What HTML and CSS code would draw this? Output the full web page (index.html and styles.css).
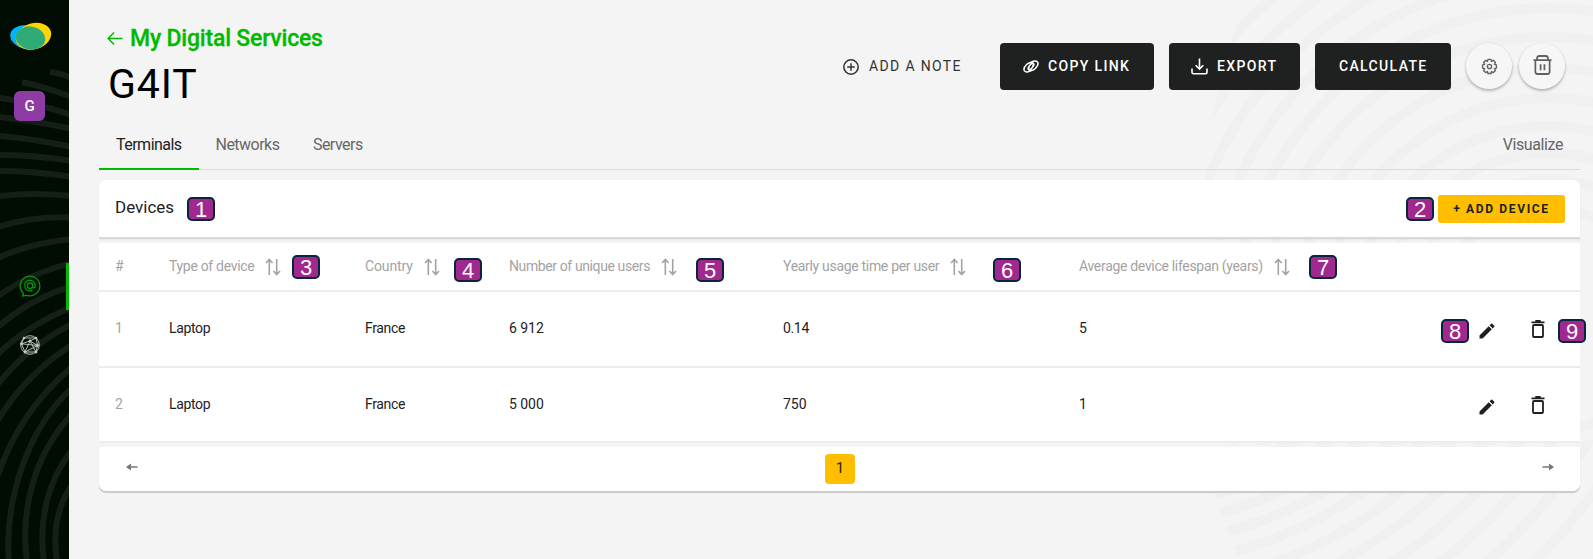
FILE: index.html
```html
<!DOCTYPE html>
<html lang="en">
<head>
<meta charset="utf-8">
<title>G4IT - My Digital Services</title>
<link rel="stylesheet" href="styles.css">
</head>
<body>
<svg class="defs" width="0" height="0" aria-hidden="true">
  <symbol id="sort" viewBox="0 0 16 18"><path d="M4.300 17V1.500M1 5l3.300-3.500L7.600 5M11.700 1v15.500M8.400 13l3.300 3.500L15 13" fill="none" stroke="currentColor" stroke-width="1.600"/></symbol>
  <symbol id="edit" viewBox="0 0 24 24"><path d="M3 17.250V21h3.750L17.810 9.940l-3.750-3.750L3 17.250zM20.710 7.040a1 1 0 0 0 0-1.410l-2.340-2.340a1 1 0 0 0-1.410 0l-1.830 1.830 3.750 3.750 1.830-1.830z"/></symbol>
  <symbol id="bin" viewBox="0 0 14 18"><path d="M.5 2.300h13M4.300.9h5.400" fill="none" stroke="currentColor" stroke-width="1.800"/><rect x="2" y="5" width="10" height="12" rx="1" fill="none" stroke="currentColor" stroke-width="1.800"/></symbol>
</svg>
<div class="app">
  <aside class="sidebar">
    <svg class="sidebar-rings" width="69" height="559" viewBox="0 0 69 559">
      <g fill="none" stroke="#142017" stroke-width="6">
        <path d="M50 72Q60 73 72 78M22 82Q45 87 72 97M0 98Q35 103 72 115M0 117Q35 121 72 129M0 136Q35 139 72 147M0 155Q35 155 72 161M0 171Q35 171 72 177"/>
        <path d="M0 196Q35 192 72 196M-2 227Q32 216 72 217.500M-2 258Q30 243 72 239M-2 296Q30 273 72 263M-2 327Q28 300 72 286M-2 354Q28 325 72 307M-2 384Q28 346 72 324M-2 420Q26 374 72 345M-2 475Q20 411 72 367"/>
        <path d="M9 562C4 500 28 428 72 388M27 562C20 510 34 455 72 414M44 562C38 520 48 480 72 450M57 562C52 530 58 505 72 485"/>
      </g>
    </svg>
    <svg class="logo" width="42" height="29" viewBox="0 0 42 29">
      <defs><clipPath id="blue-shape"><ellipse cx="17.500" cy="15.500" rx="17.500" ry="11.800" transform="rotate(12 17.500 15.500)"/></clipPath></defs>
      <ellipse cx="17.500" cy="15.500" rx="17.500" ry="11.800" transform="rotate(12 17.500 15.500)" fill="#00b4fb"/>
      <ellipse cx="23.500" cy="14.300" rx="18" ry="13" transform="rotate(-16 23.500 14.300)" fill="#ffd500"/>
      <ellipse cx="20.500" cy="16" rx="14.800" ry="11.500" transform="rotate(10 20.500 16)" fill="#2fac75"/>
    </svg>
    <div class="avatar">G</div>
    <nav class="side-nav">
      <div class="side-item active">
        <svg width="22" height="22" viewBox="0 0 22 22" fill="none" stroke="currentColor" stroke-width="1.300"><path d="M4.500 18.300A9.800 9.800 0 1 1 8 20.300L3.500 21z"/><circle cx="11" cy="10.700" r="2.700"/><path d="M13.700 8v3.200c0 2.700 2.600 2.200 2.600-.7a5.300 5.300 0 1 0-2.500 4.600"/></svg>
      </div>
      <div class="side-item">
        <svg width="22" height="22" viewBox="0 0 22 22" fill="none" stroke="currentColor" stroke-width=".9"><circle cx="11" cy="11" r="9.300"/><path d="M5 4h12M5 4L2.500 9.800 6 18h11l1.500-6.500L11 7 6 18M17 4l-6 3-8.500 2.800 16 1.700M17 4l1.500 7.500L6 18M11 7l6 11"/><g fill="currentColor" stroke="none"><circle cx="11" cy="7" r="1.400"/><circle cx="2.500" cy="9.800" r="1.400"/><circle cx="6" cy="18" r="1.400"/><circle cx="17" cy="18" r="1.400"/><circle cx="18.500" cy="11.500" r="1.400"/><circle cx="5" cy="4" r="1.300"/><circle cx="17" cy="4" r="1.300"/></g></svg>
      </div>
    </nav>
  </aside>

  <main class="main">
    <svg class="main-rings" width="400" height="559" viewBox="1193 0 400 559">
      <defs>
        <clipPath id="upper"><path d="M1247 0Q1205 90 1203 240H1230V445H1593V0z"/></clipPath>
        <clipPath id="lower"><path d="M1203 440Q1215 510 1240 559H1593V440z"/></clipPath>
      </defs>
      <g fill="none" stroke="#f0f0f0" stroke-width="10" clip-path="url(#upper)">
        <circle cx="1548" cy="320" r="112"/><circle cx="1548" cy="320" r="140"/><circle cx="1548" cy="320" r="167"/><circle cx="1548" cy="320" r="194"/><circle cx="1548" cy="320" r="222"/><circle cx="1548" cy="320" r="252"/><circle cx="1548" cy="320" r="283"/><circle cx="1548" cy="320" r="312"/><circle cx="1548" cy="320" r="340"/><circle cx="1548" cy="320" r="368"/><circle cx="1548" cy="320" r="396"/><circle cx="1548" cy="320" r="424"/>
      </g>
      <g fill="none" stroke="#f0f0f0" stroke-width="10" clip-path="url(#lower)">
        <circle cx="1130" cy="160" r="325"/><circle cx="1130" cy="160" r="345"/><circle cx="1130" cy="160" r="364"/><circle cx="1130" cy="160" r="384"/><circle cx="1130" cy="160" r="405"/><circle cx="1130" cy="160" r="428"/><circle cx="1130" cy="160" r="453"/><circle cx="1130" cy="160" r="480"/><circle cx="1130" cy="160" r="508"/><circle cx="1130" cy="160" r="538"/><circle cx="1130" cy="160" r="570"/>
      </g>
    </svg>

    <header class="header">
      <div class="titles">
        <div class="back">
          <svg width="16" height="14" viewBox="0 0 16 14" fill="none" stroke="currentColor" stroke-width="1.500"><path d="M15.500 7.500H1.200M7 1.500L1.200 7.500 7 13.500"/></svg>
          <span>My Digital Services</span>
        </div>
        <h1 class="title">G4IT</h1>
      </div>
      <div class="actions">
        <button class="btn note">
          <svg width="16" height="16" viewBox="0 0 16 16" fill="none" stroke="currentColor" stroke-width="1.500"><circle cx="8" cy="8" r="7.200"/><path d="M8 4.200v7.600M4.200 8h7.600"/></svg>
          <span>ADD A NOTE</span>
        </button>
        <button class="btn dark copy">
          <svg width="16" height="13" viewBox="0 0 17 14" fill="none" stroke="currentColor" stroke-width="1.700"><path d="M9.500 10.200C6.500 13.500 2.800 13.400 1.500 11.700.2 9.800 1.200 7.400 3.800 4.900 6.500 2.300 9.300 1.800 10.700 3.500c1.200 1.600.3 3.600-1.500 5.400-1.500 1.500-2.900 1.700-3.500 1-.6-.8 0-1.900 1-2.900"/><path d="M7.500 3.800C10.500.5 14.200.6 15.500 2.300c1.300 1.900.3 4.300-2.300 6.800-2.700 2.600-5.500 3.100-6.900 1.400-1.200-1.600-.3-3.600 1.500-5.400 1.500-1.500 2.900-1.700 3.500-1 .6.800 0 1.900-1 2.900"/></svg>
          <span>COPY LINK</span>
        </button>
        <button class="btn dark export">
          <svg width="17" height="17" viewBox="0 0 17 17" fill="none" stroke="currentColor" stroke-width="1.600"><path d="M8.500.5v10.500M4.700 7.200l3.800 3.900 3.800-3.900M1 10.500v3.700q0 1.500 1.500 1.500h12q1.500 0 1.500-1.500v-3.700"/></svg>
          <span>EXPORT</span>
        </button>
        <button class="btn dark calc"><span>CALCULATE</span></button>
        <button class="round">
          <svg width="17" height="17" viewBox="0 0 16 16" fill="none" stroke="currentColor" stroke-width="1.300" stroke-linejoin="round"><path d="M6.600.8h2.800l.5 1.900 1.700-1 2 2-1 1.700 1.900.5v3.100l-1.900.5 1 1.700-2 2-1.700-1-.5 1.900H6.600l-.5-1.900-1.700 1-2-2 1-1.700-1.900-.5V5.900l1.900-.5-1-1.700 2-2 1.700 1z" transform="translate(0 .5)"/><circle cx="8" cy="8" r="2"/></svg>
        </button>
        <button class="round second">
          <svg width="19" height="20" viewBox="0 0 20 20" preserveAspectRatio="none" fill="none" stroke="currentColor" stroke-width="1.800"><path d="M.5 5.200h19M4.200 5V3.500Q4.200 1 6.700 1h6.600q2.500 0 2.500 2.500V5M2.500 5.500v11.300q0 2.200 2.200 2.200h10.600q2.200 0 2.200-2.200V5.500M8 9.300v6M12 9.300v6"/></svg>
        </button>
      </div>
    </header>

    <nav class="tabs">
      <a class="tab active">Terminals</a>
      <a class="tab">Networks</a>
      <a class="tab">Servers</a>
      <a class="tab last">Visualize</a>
    </nav>

    <section class="card">
      <div class="card-head">
        <h2 class="card-title">Devices</h2>
        <button class="add">+ ADD DEVICE</button>
      </div>
      <div class="row head">
        <div>#</div>
        <div class="col"><span>Type of device</span><svg class="sort"><use href="#sort"/></svg></div>
        <div class="col country"><span>Country</span><svg class="sort"><use href="#sort"/></svg></div>
        <div class="col users"><span>Number of unique users</span><svg class="sort"><use href="#sort"/></svg></div>
        <div class="col"><span>Yearly usage time per user</span><svg class="sort"><use href="#sort"/></svg></div>
        <div class="col"><span>Average device lifespan (years)</span><svg class="sort"><use href="#sort"/></svg></div>
      </div>
      <div class="row first">
        <div class="num">1</div><div>Laptop</div><div>France</div><div class="value">6 912</div><div>0.14</div><div>5</div>
        <div class="tools"><svg class="edit"><use href="#edit"/></svg><svg class="bin"><use href="#bin"/></svg></div>
      </div>
      <div class="row">
        <div class="num">2</div><div>Laptop</div><div>France</div><div class="value">5 000</div><div class="value">750</div><div>1</div>
        <div class="tools"><svg class="edit"><use href="#edit"/></svg><svg class="bin"><use href="#bin"/></svg></div>
      </div>
      <div class="pager">
        <svg width="12" height="8" viewBox="0 0 12 8"><path d="M0 4l5-3.500v2.700h6.500v1.600H5v2.700z" fill="#777"/></svg>
        <span class="page">1</span>
        <svg width="12" height="8" viewBox="0 0 12 8"><path d="M12 4L7 .5v2.700H.5v1.600H7v2.700z" fill="#777"/></svg>
      </div>
    </section>
  </main>

  <span class="badge b1">1</span>
  <span class="badge b2">2</span>
  <span class="badge b3">3</span>
  <span class="badge b4">4</span>
  <span class="badge b5">5</span>
  <span class="badge b6">6</span>
  <span class="badge b7">7</span>
  <span class="badge b8">8</span>
  <span class="badge b9">9</span>
</div>
</body>
</html>
```
FILE: styles.css
```css
* { box-sizing: border-box; }
body { margin: 0; font-family: Roboto, "Liberation Sans", sans-serif; color: #1e211f; background: #f4f4f4; }
h1, h2 { margin: 0; font-weight: 400; }
button { font: inherit; border: 0; margin: 0; padding: 0; background: none; color: inherit; }
svg { display: block; flex: none; }
.defs { position: absolute; }
.app { position: relative; display: flex; width: 1593px; height: 559px; overflow: hidden; }

.sidebar { position: relative; width: 69px; background: #010c03; padding-top: 22px; flex: none; }
.sidebar-rings { position: absolute; left: 0; top: 0; }
.logo { position: relative; margin-left: 10px; }
.avatar { position: relative; margin: 40px 0 0 14px; width: 31px; height: 30px; border-radius: 6px; background: #8e3ba4; color: #fff; font-size: 15px; font-weight: 500; line-height: 31px; text-align: center; }
.side-nav { position: relative; margin-top: 142px; }
.side-item { height: 47px; padding: 12px 0 0 19px; color: #c3c9c4; }
.side-item.active { color: #04950a; border-right: 3px solid #00ba00; margin-bottom: 12px; }

.main { position: relative; flex: 1; padding: 0 13px 0 30px; }
.main-rings { position: absolute; right: 0; top: 0; }
.header { position: relative; display: flex; justify-content: space-between; height: 124px; }
.titles { padding: 24px 0 0 8px; }
.back { display: flex; align-items: center; gap: 7px; height: 28px; color: #00ba00; font-size: 23px; font-weight: 500; letter-spacing: -.2px; -webkit-text-stroke: .3px #00ba00; }
.title { margin: 8px 0 0 1px; font-size: 41px; line-height: 48px; letter-spacing: .9px; color: #000; }
.actions { display: flex; padding: 43px 15px 0 0; }
.btn { display: flex; align-items: center; height: 47px; font-size: 14px; font-weight: 500; letter-spacing: 1.35px; white-space: nowrap; border-radius: 4px; }
.btn span { position: relative; top: -1px; }
.note { width: 157px; gap: 10px; color: #333; font-weight: 400; }
.dark { background: #1e211f; color: #fff; }
.copy { width: 154px; padding-left: 23px; gap: 9px; margin-right: 15px; }
.export { width: 131px; padding-left: 22px; gap: 9px; margin-right: 15px; }
.calc { width: 136px; padding-left: 24px; margin-right: 15px; }
.round { width: 46px; height: 46px; display: flex; align-items: center; justify-content: center; border-radius: 50%; color: #606060; background: rgba(246,246,246,.7); box-shadow: 0 2px 3px rgba(0,0,0,.26), 0 0 2px rgba(0,0,0,.1); }
.second { margin-left: 7px; padding-bottom: 2px; }

.tabs { position: relative; display: flex; height: 46px; border-bottom: 1px solid #dcdcdc; font-size: 16px; letter-spacing: -.52px; color: #666; }
.tab { height: 46px; padding: 9px 17px 0 16.500px; line-height: 23px; }
.tab.active { width: 100px; color: #222; padding-left: 17px; border-bottom: 2px solid #00ba00; }
.tab.last { margin-left: auto; letter-spacing: -.4px; }

.card { position: relative; margin-top: 10px; }
.card-head { display: flex; justify-content: space-between; height: 59px; padding: 15px 15px 0 16px; background: #fff; border-radius: 7px 7px 0 0; border-bottom: 2px solid #d9d9d9; box-shadow: 0 1px 2px rgba(0,0,0,.06); margin-bottom: 4px; }
.card-title { font-size: 17px; line-height: 25px; }
.add { width: 127px; height: 28px; background: #ffbe00; border-radius: 3px; font-size: 12px; font-weight: 700; letter-spacing: 1.65px; line-height: 27px; white-space: nowrap; }
.row { display: grid; grid-template-columns: 54px 196px 144px 274px 296px 379px 1fr; align-items: center; height: 75px; padding: 0 0 1px 16px; background: #fff; border-bottom: 2px solid #ededed; font-size: 14px; letter-spacing: -.35px; }
.row.first { height: 76px; padding-bottom: 3px; }
.row.head { height: 49px; color: #a3a3a3; padding-bottom: 1px; letter-spacing: -.31px; }
.row .users { letter-spacing: -.39px; }
.row .country { letter-spacing: -.14px; }
.row .value { letter-spacing: -.05px; }
.col { display: flex; align-items: center; gap: 11px; white-space: nowrap; }
.sort { width: 16px; height: 18px; margin-top: 1px; }
.num { color: #a3a3a3; }
.tools { display: flex; align-items: center; color: #1e211f; fill: currentColor; }
.edit { width: 20px; height: 20px; margin: 6px 0 0 19px; }
.bin { width: 14px; height: 18px; margin: 2px 0 0 34px; }
.pager { display: flex; align-items: center; justify-content: space-between; height: 44px; margin-top: 4px; padding: 0 26px 2px 27px; background: #fff; border-radius: 0 0 7px 7px; box-shadow: 0 2px 1px #c9c9c9; }
.page { width: 30px; height: 30px; margin-top: 2px; background: #ffbe00; border-radius: 4px; line-height: 28px; text-align: center; font-size: 15px; }
.pager svg { margin-top: -2px; }

.badge { position: absolute; width: 28px; height: 24px; border: 2px solid #09253a; border-radius: 5px; background: #a0288e; color: #fff; font: 22px/21px "Liberation Sans", Arial, sans-serif; text-align: center; }
.b1 { left: 187px; top: 197px; }
.b2 { left: 1406px; top: 197px; }
.b3 { left: 292px; top: 255px; }
.b4 { left: 454px; top: 258px; }
.b5 { left: 696px; top: 258px; }
.b6 { left: 993px; top: 258px; }
.b7 { left: 1309px; top: 255px; }
.b8 { left: 1441px; top: 319px; }
.b9 { left: 1558px; top: 319px; }
```
